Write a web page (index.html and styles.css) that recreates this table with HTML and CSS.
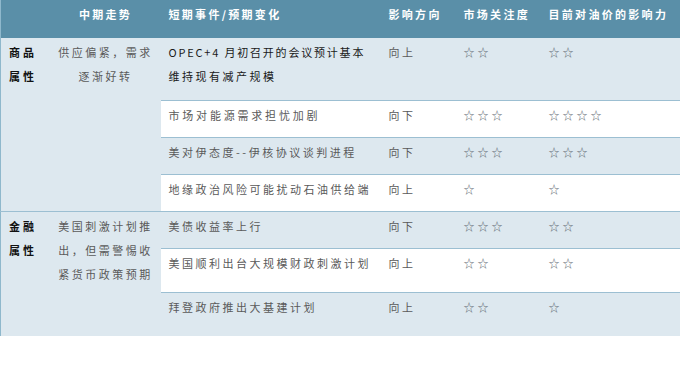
FILE: index.html
```html
<!DOCTYPE html>
<html lang="zh-CN">
<head>
<meta charset="utf-8">
<link rel="stylesheet" href="styles.css">
</head>
<body>
<table class="grid">
  <colgroup>
    <col class="c1"><col class="c2"><col class="c3"><col class="c4"><col class="c5"><col class="c6">
  </colgroup>
  <thead>
    <tr class="head">
      <th></th>
      <th class="mid">中期走势</th>
      <th>短期事件/预期变化</th>
      <th>影响方向</th>
      <th>市场关注度</th>
      <th>目前对油价的影响力</th>
    </tr>
  </thead>
  <tbody>
    <tr class="r-tall">
      <td rowspan="4" class="cat">商品<br>属性</td>
      <td rowspan="4" class="mid">供应偏紧，需求<br>逐渐好转</td>
      <td class="ev dark"><span class="tight">OPEC+4 月初召开的会议预计基本</span><br>维持现有减产规模</td>
      <td>向上</td>
      <td class="star">☆☆</td>
      <td class="star">☆☆</td>
    </tr>
    <tr class="r white">
      <td class="ev wide">市场对能源需求担忧加剧</td>
      <td>向下</td>
      <td class="star">☆☆☆</td>
      <td class="star">☆☆☆☆</td>
    </tr>
    <tr class="r">
      <td class="ev">美对伊态度--伊核协议谈判进程</td>
      <td>向下</td>
      <td class="star">☆☆☆</td>
      <td class="star">☆☆☆</td>
    </tr>
    <tr class="r white">
      <td class="ev">地缘政治风险可能扰动石油供给端</td>
      <td>向上</td>
      <td class="star">☆</td>
      <td class="star">☆</td>
    </tr>
    <tr class="r group">
      <td rowspan="3" class="cat">金融<br>属性</td>
      <td rowspan="3" class="mid">美国刺激计划推<br>出，但需警惕收<br>紧货币政策预期</td>
      <td class="ev">美债收益率上行</td>
      <td>向下</td>
      <td class="star">☆☆☆</td>
      <td class="star">☆☆</td>
    </tr>
    <tr class="r2 white">
      <td class="ev">美国顺利出台大规模财政刺激计划</td>
      <td>向上</td>
      <td class="star">☆☆</td>
      <td class="star">☆☆</td>
    </tr>
    <tr class="r2">
      <td class="ev">拜登政府推出大基建计划</td>
      <td>向上</td>
      <td class="star">☆☆</td>
      <td class="star">☆</td>
    </tr>
  </tbody>
</table>
</body>
</html>
```
FILE: styles.css
```css
html, body {
  margin: 0;
  padding: 0;
  background: #ffffff;
}

.grid {
  width: 680px;
  border-collapse: collapse;
  table-layout: fixed;
  font-family: "Noto Sans CJK SC", "Noto Sans", sans-serif;
  font-size: 11px;
  line-height: 24px;
  letter-spacing: 2.5px;
  color: #5a5a5a;
  background: #dde8ef;
  border-left: 1px solid #8fb8cc;
}

.c1 { width: 50px; }
.c2 { width: 110px; }
.c3 { width: 220px; }
.c4 { width: 75px; }
.c5 { width: 85px; }
.c6 { width: 140px; }

.grid th,
.grid td {
  padding: 2px 0 0 8px;
  vertical-align: top;
  text-align: left;
  white-space: nowrap;
  overflow: hidden;
}

.head {
  height: 38px;
  background: #5a8fa8;
}

.head th {
  color: #ffffff;
  font-weight: 700;
  letter-spacing: 2.3px;
}

.grid .mid {
  padding-left: 0;
  padding-right: 0;
  text-align: center;
}

.r-tall { height: 62px; }
.r { height: 37px; }
.r2 { height: 44px; }

.r td,
.r2 td {
  border-top: 1px solid #9cbfd2;
}

.group td {
  border-top: 1px solid #9cbfd2;
}

.white td.ev,
.white td.ev ~ td {
  background: #ffffff;
}

.cat {
  color: #111111;
  font-weight: 700;
  letter-spacing: 3px;
}

.dark { color: #1a1a1a; }
.tight { letter-spacing: 1.8px; }
.wide { letter-spacing: 2.8px; }

.star {
  font-family: "Noto Sans CJK SC", "DejaVu Sans", sans-serif;
  font-size: 11px;
  letter-spacing: 3px;
  color: #5f6a72;
}
```
